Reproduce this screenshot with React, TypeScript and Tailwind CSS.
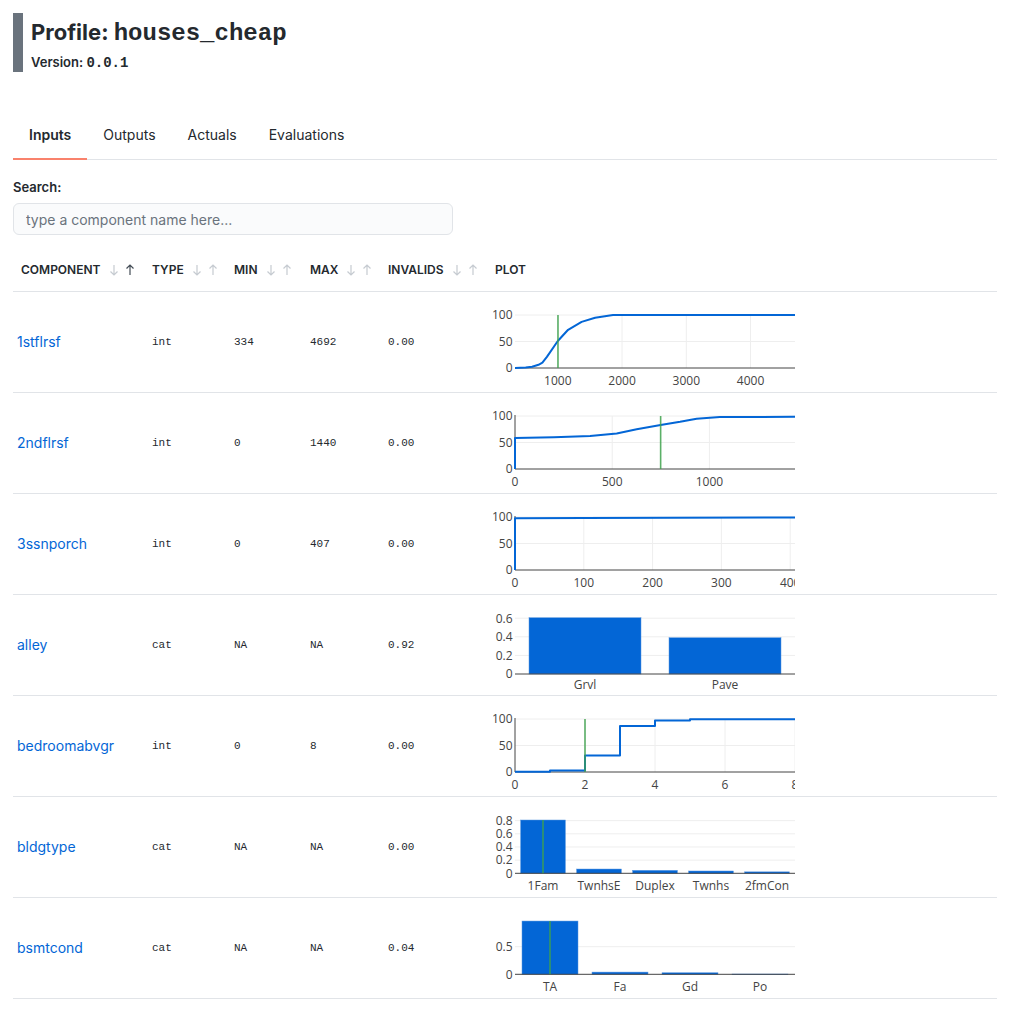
import type { ReactNode } from 'react';

const BLUE = '#0366d6';
const GREEN = '#3fa34d';
const GRID = '#eeeeee';
const AXIS = '#444444';
const X0 = 22;
const X1 = 302;

type Pt = [number, number];

function SortArrows({ active }: { active?: boolean }) {
  return (
    <span className="ml-2 flex items-center gap-[6px]">
      <svg width="10" height="12" viewBox="0 0 10 12" fill="none" stroke="#c6cbd1" strokeWidth="1.2">
        <path d="M5 1v10M1.5 7.5 5 11l3.5-3.5" />
      </svg>
      <svg width="10" height="12" viewBox="0 0 10 12" fill="none" stroke={active ? '#444d56' : '#c6cbd1'} strokeWidth="1.2">
        <path d="M5 11V1M1.5 4.5 5 1l3.5 3.5" />
      </svg>
    </span>
  );
}

function LineChart({
  xmin,
  xmax,
  ticks,
  points,
  marker,
  step,
}: {
  xmin: number;
  xmax: number;
  ticks: number[];
  points: Pt[];
  marker?: number;
  step?: boolean;
}) {
  const top = 23;
  const bottom = 76;
  const px = (x: number) => X0 + ((x - xmin) / (xmax - xmin)) * (X1 - X0);
  const py = (y: number) => bottom - (y / 100) * (bottom - top);

  let pts: Pt[] = points;
  if (step) {
    pts = [];
    points.forEach((p, i) => {
      if (i > 0) pts.push([p[0], points[i - 1][1]]);
      pts.push(p);
    });
  }
  const d = pts.map((p) => `${px(p[0]).toFixed(1)},${py(p[1]).toFixed(1)}`).join(' ');

  return (
    <svg width="302" height="100" fontFamily="'Open Sans', sans-serif" fontSize="12">
      {ticks.map((t) =>
        t === 0 ? null : <line key={t} x1={px(t)} x2={px(t)} y1={top} y2={bottom} stroke={GRID} />
      )}
      {[50, 100].map((v) => (
        <line key={v} x1={X0} x2={X1} y1={py(v)} y2={py(v)} stroke={GRID} />
      ))}
      {xmin === 0 && <line x1={X0} x2={X0} y1={top - 1} y2={bottom} stroke={AXIS} />}
      <line x1={X0} x2={X1} y1={bottom} y2={bottom} stroke={AXIS} />
      <polyline points={d} fill="none" stroke={BLUE} strokeWidth="2" strokeLinejoin="round" />
      {marker !== undefined && (
        <line x1={px(marker)} x2={px(marker)} y1={top} y2={bottom} stroke={GREEN} strokeWidth="1.6" opacity="0.85" />
      )}
      {[0, 50, 100].map((v) => (
        <text key={v} x={19.5} y={py(v) + 4.3} textAnchor="end" fill={AXIS}>
          {v}
        </text>
      ))}
      {ticks.map((t) => (
        <text key={t} x={px(t)} y={93} textAnchor="middle" fill={AXIS}>
          {t}
        </text>
      ))}
    </svg>
  );
}

function BarChart({
  cats,
  zero,
  unit,
  ticks,
  labelY,
  marker,
}: {
  cats: [string, number][];
  zero: number;
  unit: number;
  ticks: string[];
  labelY: number;
  marker?: boolean;
}) {
  const cw = (X1 - X0) / cats.length;
  const bw = cw * 0.8;
  const py = (v: number) => zero - v * unit;
  return (
    <svg width="302" height="100" fontFamily="'Open Sans', sans-serif" fontSize="12">
      {ticks.slice(1).map((t) => (
        <line key={t} x1={X0} x2={X1} y1={py(parseFloat(t))} y2={py(parseFloat(t))} stroke={GRID} />
      ))}
      {cats.map(([label, v], i) => {
        const cx = X0 + cw * i + cw / 2;
        return (
          <rect
            key={label}
            x={cx - bw / 2}
            y={py(v)}
            width={bw}
            height={Math.max(zero - py(v), 0.6)}
            fill={BLUE}
            stroke="#5a97e0"
            strokeWidth="0.5"
          />
        );
      })}
      <line x1={X0} x2={X1} y1={zero} y2={zero} stroke={AXIS} />
      {marker && (
        <line x1={X0 + cw / 2} x2={X0 + cw / 2} y1={23} y2={zero} stroke={GREEN} strokeWidth="1.6" opacity="0.85" />
      )}
      {ticks.map((t) => (
        <text key={t} x={19.5} y={py(parseFloat(t)) + 4.3} textAnchor="end" fill={AXIS}>
          {t}
        </text>
      ))}
      {cats.map(([label], i) => (
        <text key={label} x={X0 + cw * i + cw / 2} y={labelY + 4.3} textAnchor="middle" fill={AXIS}>
          {label}
        </text>
      ))}
    </svg>
  );
}

const rows: { name: string; type: string; min: string; max: string; inv: string; plot: ReactNode }[] = [
  {
    name: '1stflrsf',
    type: 'int',
    min: '334',
    max: '4692',
    inv: '0.00',
    plot: (
      <LineChart
        xmin={334}
        xmax={4692}
        ticks={[1000, 2000, 3000, 4000]}
        marker={1003}
        points={[
          [334, 0],
          [500, 1],
          [600, 2.5],
          [700, 6],
          [760, 10],
          [830, 21],
          [1000, 51],
          [1160, 72],
          [1370, 87],
          [1580, 95],
          [1860, 100],
          [4692, 100],
        ]}
      />
    ),
  },
  {
    name: '2ndflrsf',
    type: 'int',
    min: '0',
    max: '1440',
    inv: '0.00',
    plot: (
      <LineChart
        xmin={0}
        xmax={1440}
        ticks={[0, 500, 1000]}
        marker={749}
        points={[
          [0, 0],
          [0, 58.5],
          [200, 60],
          [386, 62],
          [523, 67],
          [626, 75],
          [749, 83],
          [849, 89],
          [934, 95],
          [1054, 98],
          [1440, 98.5],
        ]}
      />
    ),
  },
  {
    name: '3ssnporch',
    type: 'int',
    min: '0',
    max: '407',
    inv: '0.00',
    plot: (
      <LineChart
        xmin={0}
        xmax={407}
        ticks={[0, 100, 200, 300, 400]}
        points={[
          [0, 0],
          [0, 97.8],
          [100, 98.3],
          [407, 99.2],
        ]}
      />
    ),
  },
  {
    name: 'alley',
    type: 'cat',
    min: 'NA',
    max: 'NA',
    inv: '0.92',
    plot: (
      <BarChart
        cats={[
          ['Grvl', 0.605],
          ['Pave', 0.39],
        ]}
        zero={79}
        unit={93}
        ticks={['0', '0.2', '0.4', '0.6']}
        labelY={90}
      />
    ),
  },
  {
    name: 'bedroomabvgr',
    type: 'int',
    min: '0',
    max: '8',
    inv: '0.00',
    plot: (
      <LineChart
        xmin={0}
        xmax={8}
        ticks={[0, 2, 4, 6, 8]}
        marker={2}
        step
        points={[
          [0, 0.5],
          [1, 3],
          [2, 31],
          [3, 87],
          [4, 97],
          [5, 99.5],
          [8, 100],
        ]}
      />
    ),
  },
  {
    name: 'bldgtype',
    type: 'cat',
    min: 'NA',
    max: 'NA',
    inv: '0.00',
    plot: (
      <BarChart
        cats={[
          ['1Fam', 0.81],
          ['TwnhsE', 0.065],
          ['Duplex', 0.045],
          ['Twnhs', 0.035],
          ['2fmCon', 0.022],
        ]}
        zero={76.3}
        unit={65.8}
        ticks={['0', '0.2', '0.4', '0.6', '0.8']}
        labelY={89}
        marker
      />
    ),
  },
  {
    name: 'bsmtcond',
    type: 'cat',
    min: 'NA',
    max: 'NA',
    inv: '0.04',
    plot: (
      <BarChart
        cats={[
          ['TA', 0.965],
          ['Fa', 0.04],
          ['Gd', 0.028],
          ['Po', 0.005],
        ]}
        zero={76.3}
        unit={55.2}
        ticks={['0', '0.5']}
        labelY={88.7}
        marker
      />
    ),
  },
];

const cols = 'grid grid-cols-[131px_82px_76px_78px_107px_1fr]';
const mono = "font-['Liberation_Mono',monospace]";

export default function App() {
  const tabs = ['Inputs', 'Outputs', 'Actuals', 'Evaluations'];
  return (
    <div className="min-h-screen bg-white text-[#24292e] font-[Inter,'Noto_Sans',sans-serif]">
      <div className="ml-[13px] w-[984px] pt-[13px] pb-6">
        {/* header */}
        <div className="border-l-[10px] border-[#6a737d] pl-2 pt-[5px]">
          <h1 className="text-[22px] leading-[28px] font-bold">
            Profile: <code className={`${mono} text-[24px] leading-none`}>houses_cheap</code>
          </h1>
          <div className="mt-[6px] text-[13px] leading-5 font-semibold">
            Version: <code className={`${mono} text-[14px] leading-none`}>0.0.1</code>
          </div>
        </div>

        {/* tabs */}
        <div className="mt-10 flex border-b border-[#e1e4e8]">
          {tabs.map((t, i) => (
            <div
              key={t}
              className={`-mb-px px-4 pt-[13px] pb-[13px] text-sm leading-5 border-b-2 ${
                i === 0 ? 'border-[#f9826c] font-semibold text-[#24292e]' : 'border-transparent text-[#24292e]'
              }`}
            >
              {t}
            </div>
          ))}
        </div>

        {/* search */}
        <div className="mt-[17px] text-[13px] leading-5 font-semibold">Search:</div>
        <input
          className="mt-[6px] h-8 w-[440px] rounded-md border border-[#e1e4e8] bg-[#fafbfc] px-3 text-sm outline-none placeholder:text-[#6a737d]"
          placeholder="type a component name here..."
        />

        {/* table */}
        <div className="mt-[14px]">
          <div className={`${cols} border-b border-[#e1e4e8] text-xs font-semibold leading-4 uppercase`}>
            {['Component', 'Type', 'Min', 'Max', 'Invalids'].map((h, i) => (
              <div key={h} className="flex items-center px-2 py-[13px]">
                {h}
                <SortArrows active={i === 0} />
              </div>
            ))}
            <div className="px-2 py-[13px]">Plot</div>
          </div>
          {rows.map((r) => (
            <div key={r.name} className={`${cols} h-[101px] items-center border-b border-[#e1e4e8]`}>
              <div className="pl-1 text-sm text-[#0366d6]">{r.name}</div>
              <div className={`px-2 text-[11px] ${mono}`}>{r.type}</div>
              <div className={`px-2 text-[11px] ${mono}`}>{r.min}</div>
              <div className={`px-2 text-[11px] ${mono}`}>{r.max}</div>
              <div className={`px-2 text-[11px] ${mono}`}>{r.inv}</div>
              <div className="pl-[6px] flex">{r.plot}</div>
            </div>
          ))}
        </div>
      </div>
    </div>
  );
}
